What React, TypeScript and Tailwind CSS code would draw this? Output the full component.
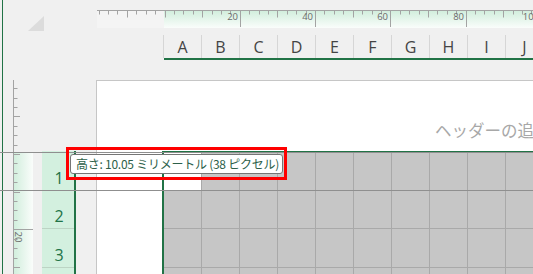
import React from "react";

const GREEN = "#217346";
const CJK = "font-['Noto_Sans_CJK_JP',sans-serif]";

// 上のルーラー (mm 目盛り)
function TopRuler() {
  const W = 436;
  const left = 97;
  const x0 = 164.5;
  const step = 9.41;
  const ticks: React.ReactNode[] = [];
  for (let k = -8; k <= 41; k++) {
    const x = Math.round(x0 + k * step) - left + 0.5;
    if (x < 0 || x > W + 30) continue;
    const isLong = k % 8 === 0 && k > 0;
    const len = isLong ? 16 : k % 4 === 0 ? 6.5 : 3.5;
    ticks.push(<line key={"t" + k} x1={x} x2={x} y1={1} y2={1 + len} stroke="#a3a3a3" strokeWidth={1} />);
    if (isLong) {
      ticks.push(
        <text key={"l" + k} x={x - 2.5} y={10} textAnchor="end" fontSize={9.5} fill="#6a6a6a" fontFamily="Open Sans, sans-serif">
          {(k / 8) * 20}
        </text>
      );
    }
  }
  return (
    <svg width={W} height={18} className="block shrink-0">
      <defs>
        <linearGradient id="tg" x1="0" x2="0" y1="0" y2="1">
          <stop offset="0" stopColor="#d2eedd" />
          <stop offset="1" stopColor="#fafdfb" />
        </linearGradient>
      </defs>
      <rect x={0} y={1} width={67} height={17} fill="#f4f4f4" />
      <rect x={67} y={1} width={W - 67} height={17} fill="url(#tg)" />
      <line x1={0} x2={W} y1={0.5} y2={0.5} stroke="#a3a3a3" />
      {ticks}
    </svg>
  );
}

// 左のルーラー
function LeftRuler({ top, height, page }: { top: number; height: number; page?: boolean }) {
  const y0 = 154;
  const step = 9.41;
  const ticks: React.ReactNode[] = [];
  for (let k = -9; k <= 14; k++) {
    const y = Math.round(y0 + k * step) - top + 0.5;
    if (y < 1 || y > height) continue;
    const isLong = k % 8 === 0 && k > 0;
    const len = isLong ? 20 : k % 4 === 0 ? 7 : 4.5;
    ticks.push(<line key={"t" + k} x1={0} x2={len} y1={y} y2={y} stroke="#a3a3a3" strokeWidth={1} />);
    if (isLong) {
      ticks.push(
        <text key={"l" + k} transform={`translate(2, ${y + 2}) rotate(90)`} fontSize={9.5} fill="#6a6a6a" fontFamily="Open Sans, sans-serif">
          {(k / 8) * 20}
        </text>
      );
    }
  }
  return (
    <svg width={20} height={height} className="block shrink-0">
      <defs>
        <linearGradient id="lg" x1="0" x2="1" y1="0" y2="0">
          <stop offset="0" stopColor="#d2eedd" />
          <stop offset="1" stopColor="#fafdfb" />
        </linearGradient>
      </defs>
      {page && <rect x={1} y={1} width={19} height={height} fill="url(#lg)" />}
      <line x1={0.5} x2={0.5} y1={0} y2={height} stroke="#a3a3a3" />
      {ticks}
    </svg>
  );
}

const COLS = ["A", "B", "C", "D", "E", "F", "G", "H", "I", "J"];
const ROWS = [
  { n: "1", h: "h-[40px]", ch: "h-[39px]" },
  { n: "2", h: "h-[38px]", ch: "h-[38px]" },
  { n: "3", h: "h-[39px]", ch: "h-[39px]" },
  { n: "", h: "h-[39px]", ch: "h-[39px]" },
];

export default function App() {
  return (
    <div className="relative w-[533px] h-[274px] overflow-hidden bg-[#f0f0f0] flex font-['Open_Sans',sans-serif]">
      <div className="w-[2px] shrink-0" />
      <div className="w-px shrink-0 bg-[#217346]" />

      <div className="flex-1 min-w-0 flex flex-col">
        {/* ルーラー + 列見出し */}
        <div className="h-[80px] shrink-0 flex">
          <div className="w-[94px] shrink-0 pt-[16px] pl-[25px]">
            <svg width={16} height={15} className="block">
              <polygon points="16,0 16,15 0,15" fill="#dcdcdc" />
            </svg>
          </div>
          <div className="flex-1 min-w-0 flex flex-col pt-[10px] overflow-hidden">
            <TopRuler />
            <div className="h-[7px]" />
            <div className="flex h-[23px] ml-[66px] border-l border-[#d6d6d6]">
              {COLS.map((c) => (
                <div
                  key={c}
                  className="w-[38px] shrink-0 border-r border-[#d6d6d6] flex items-center justify-center text-[16px] leading-none text-[#444444]"
                >
                  {c}
                </div>
              ))}
            </div>
            <div className="h-[2px] ml-[67px] bg-[#217346]" />
          </div>
        </div>

        {/* ページ上部 (ヘッダー) */}
        <div className="h-[71px] shrink-0 flex">
          <div className="w-[10px] shrink-0" />
          <LeftRuler top={80} height={71} />
          <div className="w-[63px] shrink-0" />
          <div
            className={`flex-1 min-w-0 border-l border-t border-[#c6c6c6] bg-white overflow-hidden whitespace-nowrap pl-[338px] pt-[41px] text-[16.5px] leading-none text-[#a8a8a8] ${CJK}`}
          >
            ヘッダーの追加
          </div>
        </div>

        {/* 行 */}
        <div className="flex-1 min-h-0 flex">
          <div className="w-[10px] shrink-0" />
          <LeftRuler top={151} height={123} page />
          <div className="w-[9px] shrink-0" />
          <div className="w-[32px] shrink-0 flex flex-col bg-[#d3f0df]">
            {ROWS.map((r, i) => (
              <div
                key={i}
                className={`${r.h} shrink-0 border-b border-[#bcd4c4] flex items-end justify-center pl-[2px] pb-[4px] text-[16px] leading-none text-[#217346]`}
              >
                {r.n}
              </div>
            ))}
          </div>
          <div className="w-[2px] shrink-0 bg-[#217346]" />
          <div className="w-[20px] shrink-0" />
          <div className="w-px shrink-0 bg-[#c6c6c6]" />
          <div className="w-[65px] shrink-0 bg-white" />
          <div className="flex-1 min-w-0 flex flex-col">
            <div className="h-px shrink-0 bg-[#217346]" />
            <div className="flex-1 min-h-0 flex">
              <div className="w-[2px] shrink-0 bg-[#217346]" />
              <div className="flex-1 min-w-0 flex flex-col overflow-hidden bg-[#c6c6c6]">
                {ROWS.map((r, ri) => (
                  <div key={ri} className={`${r.ch} shrink-0 flex border-b border-[#a9a9a9]`}>
                    {COLS.map((c, ci) => (
                      <div
                        key={c}
                        className={`w-[38px] shrink-0 border-r border-[#a9a9a9] ${ri === 0 && ci === 0 ? "bg-white" : ""}`}
                      />
                    ))}
                  </div>
                ))}
              </div>
            </div>
          </div>
        </div>
      </div>

      {/* ドラッグ中のガイド線 */}
      <div className="absolute left-0 right-0 top-[152px] h-px bg-[#8f8f8f]" />
      <div className="absolute left-0 right-0 top-[190px] h-px bg-[#8f8f8f]" />

      {/* ツールチップ */}
      <div
        className={`absolute left-[70px] top-[154px] w-[213px] h-[20px] border border-[#767676] rounded-[3px] bg-white flex items-center pl-[5px] whitespace-nowrap text-[12px] tracking-[-0.25px] leading-none text-[#2d5f4a] ${CJK}`}
      >
        高さ: 10.05 ミリメートル (38 ピクセル)
      </div>
      <div className="absolute left-[66px] top-[147px] w-[221px] h-[33px] border-[3px] border-[#ff0000]" />
    </div>
  );
}
